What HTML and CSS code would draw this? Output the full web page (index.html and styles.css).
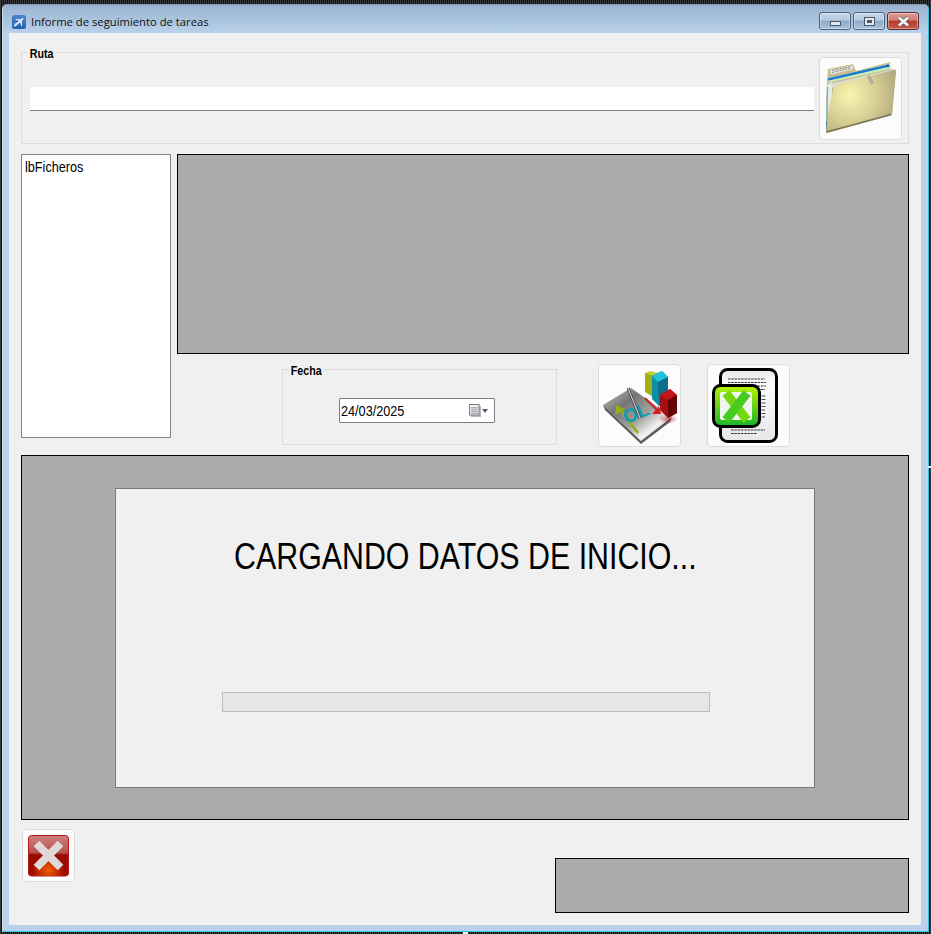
FILE: index.html
```html
<!DOCTYPE html>
<html lang="es">
<head>
<meta charset="utf-8">
<title>Informe de seguimiento de tareas</title>
<link rel="stylesheet" href="styles.css">
</head>
<body>
<span class="handle handle-right"></span>
<span class="handle handle-bottom"></span>
<div class="window">
  <header class="titlebar">
    <svg class="app-icon" width="14" height="14" viewBox="0 0 14 14">
      <defs>
        <linearGradient id="appbg" x1="0" y1="0" x2="0" y2="1">
          <stop offset="0" stop-color="#4a86cf"/>
          <stop offset="1" stop-color="#2560b0"/>
        </linearGradient>
      </defs>
      <rect x="0" y="0" width="14" height="14" rx="2.500" fill="url(#appbg)"/>
      <path d="M3 10.500 L10.500 4" stroke="#dbe6f2" stroke-width="2" stroke-linecap="round"/>
      <path d="M7.500 6 L3 4.500 L4.500 3.800 L9.500 4.500 Z M8 7 L9.500 11.500 L10.200 10.500 L9.800 5.500 Z M3.500 9.500 L2 8.500 L2.800 8.200 L4.500 9 Z" fill="#dbe6f2"/>
    </svg>
    <span class="title-text">Informe de seguimiento de tareas</span>
    <div class="caption-btns">
      <div class="cap cap-min"><span class="glyph-min"></span></div>
      <div class="cap cap-max"><span class="glyph-max"></span></div>
      <div class="cap cap-close">
        <svg width="15" height="11" viewBox="0 0 15 11">
          <path d="M3 1.500 L12 9.500 M12 1.500 L3 9.500" stroke="#5b5560" stroke-width="4.200"/>
          <path d="M3 1.500 L12 9.500 M12 1.500 L3 9.500" stroke="#f4f4f4" stroke-width="2.800"/>
        </svg>
      </div>
    </div>
  </header>
  <main class="client">
    <section class="group group-ruta">
      <span class="legend">Ruta</span>
      <div class="path-input"></div>
      <div class="img-btn btn-folder">
        <svg width="83" height="83" viewBox="0 0 83 83">
          <defs>
            <radialGradient id="fold" gradientUnits="userSpaceOnUse" cx="31" cy="38" r="50">
              <stop offset="0" stop-color="#fbf4ae"/>
              <stop offset="0.55" stop-color="#d6cd94"/>
              <stop offset="1" stop-color="#b0a87c"/>
            </radialGradient>
            <linearGradient id="foldback" x1="0" y1="0" x2="0" y2="1">
              <stop offset="0" stop-color="#cdc494"/>
              <stop offset="1" stop-color="#a9a176"/>
            </linearGradient>
          </defs>
          <path d="M9 12 L34 7 L37 14 L71 5 L72 12 L77 13 L73 58 L7 76 L7 40 Z" fill="url(#foldback)"/>
          <path d="M11 13 L33 8.500 L34 12 L12 17.500 Z" fill="#e8e8e2"/>
          <path d="M13 15.500 L32 11 M13 13.500 L32 9.500" stroke="#777772" stroke-width="0.800" stroke-dasharray="2 0.700"/>
          <path d="M9 21 L71 7 L72 11 L10 24.500 Z" fill="#ecebd2"/>
          <path d="M9 22.500 L70 8.500" stroke="#1c7cc8" stroke-width="2.400"/>
          <circle cx="69" cy="9" r="1.400" fill="#1c5fb0"/>
          <path d="M9 25 L72 11" stroke="#c5eeb4" stroke-width="1.300"/>
          <path d="M10 27 L74 12.500 L74 16 L12 31 Z" fill="#dcdcd8"/>
          <path d="M7.500 28 L13 25 L13 72 L8 75 Z" fill="#e8e8e4"/>
          <path d="M8.500 30 L8 72" stroke="#59c6cc" stroke-width="1.300"/>
          <path d="M8 64 L7.800 74" stroke="#2a62a8" stroke-width="1.300"/>
          <path d="M14 34 Q14 28 21 26.500 L75 13 Q77 12.800 77 15 L73 56 Q73 58 70 59 L10 75.500 Q7 76.500 7 74 L10 50 Z" fill="url(#fold)"/>
          <path d="M49.500 19 L53.500 27" stroke="#8f8f88" stroke-width="2.600"/>
          <path d="M49.500 19 L53.500 27" stroke="#d8d8d0" stroke-width="0.900"/>
          <path d="M7.500 75 L72 57.500" stroke="#7c7758" stroke-width="1.800"/>
        </svg>
      </div>
    </section>

    <section class="row-mid">
      <div class="listbox"><span class="condensed">lbFicheros</span></div>
      <div class="mid-right">
        <div class="panel panel-top"></div>
        <div class="tools">
          <section class="group group-fecha">
            <span class="legend legend-fecha">Fecha</span>
            <div class="date-input">
              <span class="condensed">24/03/2025</span>
              <span class="date-icons">
                <svg width="12" height="13" viewBox="0 0 12 13">
                  <rect x="2" y="2" width="10" height="11" fill="#b9b9b9"/>
                  <rect x="0.500" y="0.500" width="9.500" height="10.500" fill="#eef0f2" stroke="#7b7f85"/>
                  <path d="M2 3.500 H9 M2 5.500 H9 M2 7.500 H9 M2 9.500 H9 M3 3 V10 M5 3 V10 M7 3 V10" stroke="#a4a9b0" stroke-width="0.900"/>
                </svg>
                <span class="date-arrow"></span>
              </span>
            </div>
          </section>
          <div class="img-btn btn-chart">
            <svg width="83" height="83" viewBox="0 0 83 83">
              <defs>
                <linearGradient id="sheet" x1="0" y1="0" x2="1" y2="1">
                  <stop offset="0" stop-color="#c8c8c8"/>
                  <stop offset="0.3" stop-color="#767676"/>
                  <stop offset="0.55" stop-color="#a0a0a0"/>
                  <stop offset="0.74" stop-color="#f2f2f2"/>
                  <stop offset="1" stop-color="#8a8a8a"/>
                </linearGradient>
                <radialGradient id="redshadow" cx="0.5" cy="0.5" r="0.5">
                  <stop offset="0" stop-color="#b01218" stop-opacity="0.6"/>
                  <stop offset="1" stop-color="#b01218" stop-opacity="0"/>
                </radialGradient>
              </defs>
              <path d="M5 41 L33 24 L74 53 L43 77 Z" fill="url(#sheet)"/>
              <path d="M5 41 L43 77 L74 53 L72 58 L43 80 L7 46 Z" fill="#5c5c5c"/>
              <ellipse cx="70" cy="55" rx="10" ry="5" fill="url(#redshadow)"/>
              <path d="M47 9 L57 9 L57 34 L47 28 Z" fill="#a2ae12"/>
              <path d="M47 9 L52 7 L61 9 L57 12 Z" fill="#c4cf3c"/>
              <path d="M54 12 L64 7 L70 13 L70 38 L61 42 L54 35 Z" fill="#0c8ea8"/>
              <path d="M54 12 L64 7 L70 13 L60 18 Z" fill="#21c3d8"/>
              <path d="M60 18 L70 13 L70 38 L61 42 Z" fill="#0b6f87"/>
              <path d="M62 31 L72 25 L79 31 L79 49 L70 54 L62 46 Z" fill="#a50f14"/>
              <path d="M62 31 L72 25 L79 31 L70 36 Z" fill="#c1181c"/>
              <path d="M70 36 L79 31 L79 49 L70 54 Z" fill="#640406"/>
              <path d="M40 69 L23 47" stroke="#93ad12" stroke-width="2.500"/>
              <path d="M17 51 L18 41 L27 45 Z" fill="#93ad12"/>
              <path d="M47 34 L59 46" stroke="#cf1f25" stroke-width="2"/>
              <path d="M54 50 L63 50 L61 42 Z" fill="#cf1f25"/>
              <text class="chart-ol" x="28" y="60" transform="rotate(-22 28 60)">OL</text>
              <path d="M30 24 L42 54" stroke="#4f4f55" stroke-width="3"/>
              <path d="M30 24 L42 54" stroke="#e2e2e6" stroke-width="1"/>
            </svg>
          </div>
          <div class="img-btn btn-excel">
            <svg width="83" height="83" viewBox="0 0 83 83">
              <defs>
                <linearGradient id="xlframe" x1="0" y1="0" x2="0" y2="1">
                  <stop offset="0" stop-color="#b8f200"/>
                  <stop offset="1" stop-color="#16b42c"/>
                </linearGradient>
                <linearGradient id="paper" x1="0" y1="0" x2="0" y2="1">
                  <stop offset="0" stop-color="#e4e6e8"/>
                  <stop offset="0.2" stop-color="#fbfbfb"/>
                  <stop offset="1" stop-color="#e6e8e8"/>
                </linearGradient>
              </defs>
              <rect x="13.500" y="5.500" width="56" height="72" rx="7" fill="url(#paper)" stroke="#000" stroke-width="3"/>
              <path d="M21 15 H58 M21 18.500 H59 M21 22 H59 M21 25.500 H58" stroke="#333" stroke-width="1.100" stroke-dasharray="2.500 0.800"/>
              <path d="M52 32 H59 M52 35.500 H59 M52 39 H59 M52 42.500 H59 M52 46 H58 M52 49.500 H59 M52 53 H58" stroke="#333" stroke-width="1.100" stroke-dasharray="2.500 0.800"/>
              <path d="M24 66 H58 M24 69.500 H50" stroke="#333" stroke-width="1.100" stroke-dasharray="2.500 0.800"/>
              <rect x="6.500" y="21.500" width="46" height="41" rx="7" fill="url(#xlframe)" stroke="#000" stroke-width="3"/>
              <rect x="13" y="28" width="32" height="28" rx="2" fill="#f1f6ec"/>
              <path d="M19 29 L40 56" stroke="#74d80e" stroke-width="9"/>
              <path d="M40 29 L19 56" stroke="#46cc1e" stroke-width="9"/>
            </svg>
          </div>
        </div>
      </div>
    </section>

    <section class="panel panel-main">
      <div class="dialog">
        <h1 class="loading">CARGANDO DATOS DE INICIO...</h1>
        <div class="progress"></div>
      </div>
    </section>

    <footer class="row-bottom">
      <div class="img-btn btn-close">
        <svg width="53" height="53" viewBox="0 0 53 53">
          <defs>
            <linearGradient id="redbase" x1="0" y1="0" x2="0" y2="1">
              <stop offset="0" stop-color="#cf8080"/>
              <stop offset="0.42" stop-color="#b85050"/>
              <stop offset="0.48" stop-color="#980c00"/>
              <stop offset="1" stop-color="#a00e00"/>
            </linearGradient>
            <radialGradient id="redglow" cx="0.5" cy="0.85" r="0.4">
              <stop offset="0" stop-color="#f05a00"/>
              <stop offset="1" stop-color="#f05a00" stop-opacity="0"/>
            </radialGradient>
          </defs>
          <rect x="6.500" y="6.500" width="40" height="40.500" rx="3" fill="url(#redbase)" stroke="#b01a14"/>
          <rect x="6.500" y="6.500" width="40" height="40.500" rx="3" fill="url(#redglow)"/>
          <path d="M14.500 14.500 L38.500 38.500 M38.500 14.500 L14.500 38.500" stroke="#dfd9d9" stroke-width="8"/>
        </svg>
      </div>
      <div class="panel panel-status"></div>
    </footer>
  </main>
</div>
</body>
</html>
```

FILE: styles.css
```css
* { box-sizing: border-box; }
html, body { margin: 0; padding: 0; }
body {
  position: relative;
  width: 931px;
  height: 934px;
  overflow: hidden;
  background-color: #1a1a1a;
  background-image: repeating-linear-gradient(90deg, #3c3c3c 0 1px, #0f0f0f 1px 2px);
  padding: 4px 2px 2px 2px;
  font-family: "Liberation Sans", Arial, sans-serif;
}
.handle {
  position: absolute;
  background: #f0f0f0;
}
.handle-right { left: 928px; top: 466px; width: 3px; height: 2px; }
.handle-bottom { left: 463px; top: 932px; width: 5px; height: 2px; }
.window {
  width: 927px;
  height: 928px;
  background: #b9d1ea;
  border: 1px solid #7f9ab8;
  border-right-color: #35c3ea;
  border-bottom-color: #35c3ea;
  border-left-color: #c9dcef;
  border-radius: 5px 5px 0 0;
  display: flex;
  flex-direction: column;
}
.titlebar {
  height: 28px;
  flex: none;
  display: flex;
  align-items: center;
  padding: 5px 0 0 9px;
  background: linear-gradient(#9ab4d0, #b9d1ea);
  border-radius: 4px 4px 0 0;
}
.app-icon { flex: none; }
.title-text {
  margin-left: 5px;
  font-family: "Open Sans", sans-serif;
  font-size: 11.25px;
  color: #111;
}
.caption-btns {
  margin-left: auto;
  margin-right: 9px;
  align-self: flex-start;
  margin-top: 2px;
  display: flex;
  gap: 2px;
}
.cap {
  width: 32px;
  height: 18px;
  border: 1px solid #4f6079;
  border-radius: 3px;
  display: flex;
  align-items: center;
  justify-content: center;
  background: linear-gradient(#c6d6e8 0, #b6c9de 45%, #8fa9c5 50%, #aac3dc 100%);
  box-shadow: inset 0 0 0 1px rgba(255,255,255,0.4);
}
.cap-close {
  border-color: #5c2a33;
  background: linear-gradient(#dc9a94 0, #d27c76 45%, #b83a28 50%, #c9584a 100%);
}
.glyph-min {
  width: 11px;
  height: 5px;
  margin-top: 5px;
  background: #e4e8ee;
  border: 1px solid #47566b;
}
.glyph-max {
  width: 11px;
  height: 9px;
  background: #e4e8ee;
  border: 1px solid #47566b;
  box-shadow: inset 0 0 0 2px #e4e8ee, inset 0 0 0 4px #47566b;
}
.client {
  width: 912px;
  height: 892px;
  margin-left: 6px;
  padding: 19px 12px 0 12px;
  background: #f0f0f0;
  display: flex;
  flex-direction: column;
}
.group {
  position: relative;
  border: 1px solid #dcdcdc;
}
.legend {
  position: absolute;
  top: -5px;
  left: 6px;
  padding: 0 2px;
  background: #f0f0f0;
  font-size: 12px;
  line-height: 13px;
  font-weight: 700;
  color: #000;
  transform: scaleX(0.89);
  transform-origin: left center;
}
.group-ruta {
  width: 888px;
  height: 92px;
  flex: none;
  display: flex;
  align-items: flex-start;
  padding: 4px 0 0 8px;
}
.path-input {
  width: 784px;
  height: 24px;
  margin-top: 30px;
  background: #fff;
  border-bottom: 1px solid #808080;
}
.img-btn {
  flex: none;
  background: #fcfcfc;
  border: 1px solid #dcdcdc;
  border-radius: 4px;
  overflow: hidden;
}
.img-btn svg { display: block; margin: -1px; }
.btn-folder { width: 83px; height: 83px; margin-left: 5px; }
.row-mid {
  display: flex;
  gap: 6px;
  margin-top: 10px;
  height: 301px;
  flex: none;
}
.listbox {
  width: 150px;
  height: 284px;
  flex: none;
  background: #fff;
  border: 1px solid #82838f;
  padding: 3px;
  font-size: 14px;
  line-height: 18px;
  color: #000;
}
.condensed {
  display: inline-block;
  transform: scaleX(0.905);
  transform-origin: left center;
}
.mid-right { flex: 1; }
.panel {
  background: #ababab;
  border: 1px solid #000;
}
.panel-top { height: 200px; }
.tools {
  display: flex;
  align-items: flex-start;
  margin-top: 10px;
  padding-left: 105px;
}
.group-fecha {
  width: 275px;
  height: 76px;
  margin-top: 5px;
  display: flex;
  justify-content: center;
  padding: 28px 5px 0 0;
}
.date-input {
  width: 156px;
  height: 25px;
  background: #fff;
  border: 1px solid #808080;
  border-radius: 1px;
  padding-left: 1px;
  display: flex;
  align-items: center;
  justify-content: space-between;
  font-size: 14px;
  color: #000;
}
.date-icons {
  display: flex;
  align-items: center;
  gap: 1px;
  padding-right: 6px;
}
.date-icons svg { display: block; }
.date-arrow {
  width: 0;
  height: 0;
  border-left: 3.5px solid transparent;
  border-right: 3.5px solid transparent;
  border-top: 4px solid #4f6079;
}
.btn-chart { width: 83px; height: 83px; margin-left: 41px; }
.btn-excel { width: 83px; height: 83px; margin-left: 26px; }
.chart-ol {
  font-family: "Liberation Sans", sans-serif;
  font-weight: 700;
  font-size: 19px;
  fill: #0c9db0;
}
.panel-main {
  flex: none;
  height: 365px;
  padding: 32px 93px 0 93px;
}
.dialog {
  width: 700px;
  height: 300px;
  background: #f0f0f0;
  border: 1px solid #7a7a7a;
  display: flex;
  flex-direction: column;
  align-items: center;
}
.loading {
  margin: 48px 0 0 0;
  font-family: "Liberation Sans", sans-serif;
  font-size: 36px;
  line-height: 40px;
  font-weight: 400;
  color: #000;
  white-space: nowrap;
  transform: scaleX(0.843);
}
.progress {
  width: 488px;
  height: 20px;
  margin: 115px 0 0 2px;
  background: #e6e6e6;
  border: 1px solid #bcbcbc;
}
.row-bottom {
  display: flex;
  align-items: flex-start;
  justify-content: space-between;
  margin-top: 9px;
  padding-left: 1px;
}
.btn-close { width: 53px; height: 53px; }
.panel-status {
  width: 354px;
  height: 55px;
  margin-top: 29px;
}
```
